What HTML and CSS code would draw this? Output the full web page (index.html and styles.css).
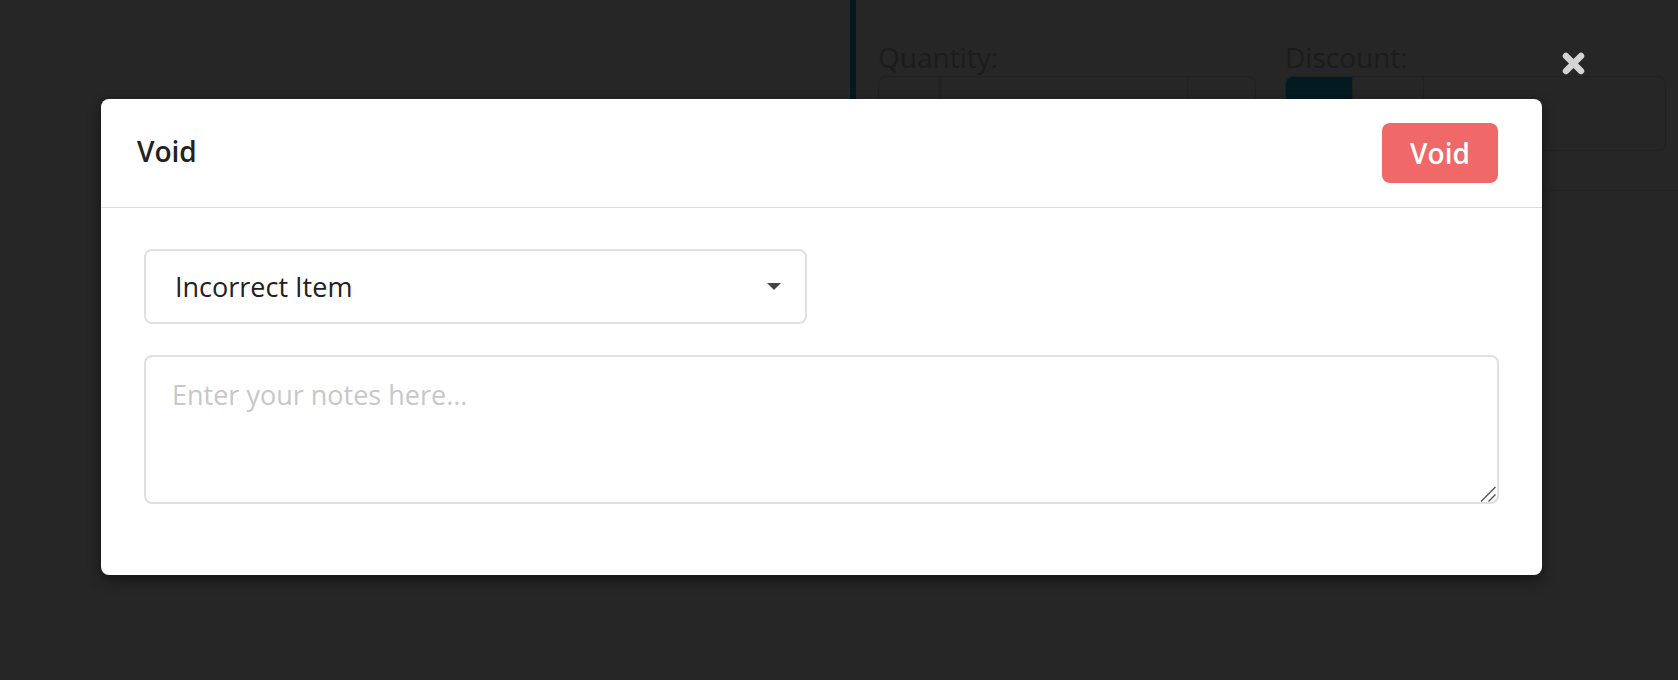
FILE: index.html
```html
<!DOCTYPE html>
<html lang="en">

<head>
    <meta charset="UTF-8">
    <meta name="viewport" content="width=device-width, initial-scale=1.0">
    <title>Void Item</title>
    <link rel="stylesheet" href="styles.css">
</head>

<body>
    <div class="page">
        <div class="side"></div>
        <div class="panel">
            <div class="fields">
                <div class="field">
                    <label>Quantity:</label>
                    <div class="box qty">
                        <div class="seg seg-btn"></div>
                        <div class="seg seg-input"></div>
                        <div class="seg seg-btn-right"></div>
                    </div>
                </div>
                <div class="field">
                    <label>Discount:</label>
                    <div class="box disc">
                        <div class="seg seg-active"></div>
                        <div class="seg seg-pct"></div>
                        <div class="seg seg-input"></div>
                    </div>
                </div>
            </div>
        </div>
    </div>

    <!-- close button over the overlay -->
    <button class="close" type="button" aria-label="Close">
        <svg width="23" height="23" viewBox="0 0 23 23">
            <path d="M4 4 L19 19 M19 4 L4 19" stroke="#d4d4d4" stroke-width="6.5" stroke-linecap="round" fill="none"/>
        </svg>
    </button>

    <div class="modal">
        <div class="modal-header">
            <h2>Void</h2>
            <button class="void-btn" type="button">Void</button>
        </div>
        <div class="modal-body">
            <div class="select">
                <span>Incorrect Item</span>
                <svg width="14" height="7" viewBox="0 0 14 7">
                    <path d="M0 0 H14 L7 7 Z" fill="#444"/>
                </svg>
            </div>
            <div class="notes-wrap">
                <textarea class="notes" placeholder="Enter your notes here..."></textarea>
                <!-- resize grip -->
                <svg class="grip" width="16" height="16" viewBox="0 0 16 16">
                    <path d="M1 15.5 L15.5 1 M8.5 15.5 L15.5 8.5" stroke="#555" stroke-width="1.4" fill="none"/>
                </svg>
            </div>
        </div>
    </div>
</body>

</html>
```

FILE: styles.css
```css
body {
    margin: 0;
    background-color: #262626;
    font-family: 'Open Sans', 'Noto Sans', sans-serif;
    height: 680px;
    overflow: hidden;
}

/* dimmed page behind the modal */
.page {
    display: flex;
    height: 680px;
}

.side {
    width: 850px;
}

.panel {
    flex: 1;
    align-self: flex-start;
    height: 152px;
    border-left: 6px solid #021a20;
    border-bottom: 1px solid #232323;
    padding: 38px 0 0 22px;
}

.fields {
    display: flex;
    gap: 29px;
}

.field label {
    display: block;
    font-size: 28px;
    line-height: 38px;
    color: #1c1c1c;
}

.box {
    display: flex;
    height: 73px;
    border: 1px solid #212121;
    border-radius: 8px;
    overflow: hidden;
}

.qty {
    width: 376px;
}

.disc {
    width: 379px;
}

.seg {
    height: 100%;
    border-right: 1px solid #212121;
}

.seg:last-child {
    border-right: none;
}

.qty .seg-btn {
    width: 59px;
    border-right: 4px solid #222;
}

.qty .seg-input {
    flex: 1;
}

.qty .seg-btn-right {
    width: 67px;
}

.seg-active {
    width: 66px;
    background-color: #021a20;
}

.seg-pct {
    width: 70px;
}

.disc .seg-input {
    flex: 1;
}

.close {
    position: absolute;
    left: 1562px;
    top: 52px;
    width: 23px;
    height: 23px;
    padding: 0;
    border: none;
    background: transparent;
    cursor: pointer;
}

.close svg {
    display: block;
}

/* modal */
.modal {
    position: absolute;
    left: 101px;
    top: 99px;
    width: 1441px;
    background-color: white;
    border-radius: 8px;
    box-shadow: rgba(0, 0, 0, 0.45) 0px 5px 14px;
}

.modal-header {
    display: flex;
    align-items: center;
    justify-content: space-between;
    height: 108px;
    padding: 0 44px 0 36px;
    border-bottom: 1px solid #dddddd;
}

.modal-header h2 {
    margin: 0 0 5px;
    font-size: 28px;
    font-weight: 600;
    color: #222;
}

.void-btn {
    width: 116px;
    height: 60px;
    border: none;
    border-radius: 8px;
    background-color: #f06868;
    color: white;
    font-family: inherit;
    font-size: 28px;
    font-weight: 600;
    cursor: pointer;
}

.modal-body {
    padding: 41px 43px 71px;
}

.select {
    display: flex;
    align-items: center;
    justify-content: space-between;
    box-sizing: border-box;
    width: 663px;
    height: 75px;
    padding: 0 24px 0 29px;
    border: 2px solid #e0e0e0;
    border-radius: 8px;
    font-size: 27px;
    color: #222;
}

.select svg {
    display: block;
}

.notes-wrap {
    position: relative;
    width: 1355px;
    margin-top: 31px;
}

.notes {
    display: block;
    box-sizing: border-box;
    width: 1355px;
    height: 149px;
    padding: 18px 26px 16px;
    border: 2px solid #e0e0e0;
    border-radius: 8px;
    font-family: inherit;
    font-size: 27px;
    line-height: 1.5;
    color: #222;
    outline: none;
    resize: none;
}

.notes::placeholder {
    color: #c8c8c8;
}

.grip {
    position: absolute;
    right: 3px;
    bottom: 2px;
    pointer-events: none;
}
```
